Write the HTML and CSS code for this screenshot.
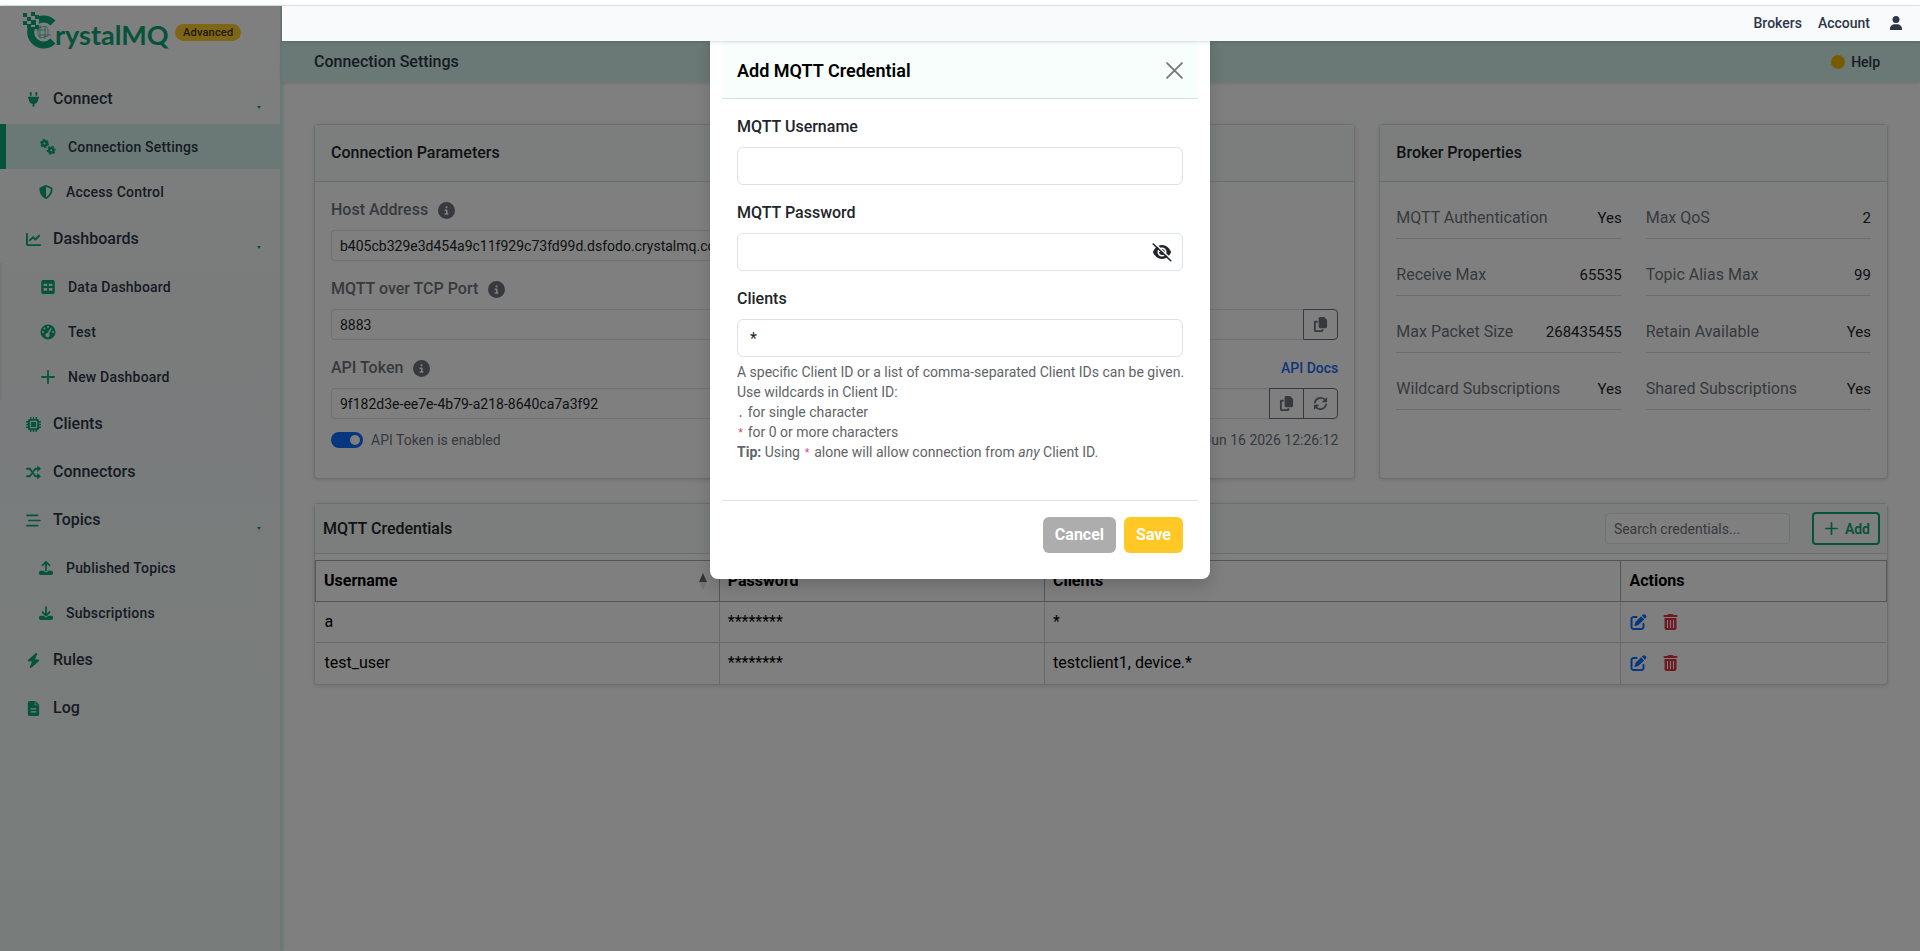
FILE: index.html
```html
<!DOCTYPE html>
<html lang="en">
<head>
  <meta charset="UTF-8" />
  <meta name="viewport" content="width=device-width, initial-scale=1" />
  <title>CrystalMQ - Connection Settings</title>
  <link rel="stylesheet" href="styles.css">
</head>
<body>
  <!-- Icon sprite -->
  <svg class="sprite" aria-hidden="true">
    <symbol id="i-plug" viewBox="0 0 384 512"><path d="M96 0C78.3 0 64 14.3 64 32v96h64V32c0-17.7-14.3-32-32-32zM288 0c-17.7 0-32 14.3-32 32v96h64V32c0-17.7-14.3-32-32-32zM32 160c-17.7 0-32 14.3-32 32s14.3 32 32 32v32c0 77.4 55 142 128 156.8V480c0 17.7 14.3 32 32 32s32-14.3 32-32V412.8C297 398 352 333.4 352 256V224c17.7 0 32-14.3 32-32s-14.3-32-32-32H32z"/></symbol>
    <symbol id="i-gears" viewBox="0 0 32 32">
      <g fill="none" stroke="currentColor">
        <circle cx="9" cy="9" r="4.5" stroke-width="5"/>
        <circle cx="9" cy="9" r="7.5" stroke-width="3" stroke-dasharray="4.4 3.45"/>
        <circle cx="22.5" cy="22.5" r="4.5" stroke-width="5"/>
        <circle cx="22.5" cy="22.5" r="7.5" stroke-width="3" stroke-dasharray="4.4 3.45" stroke-dashoffset="4"/>
      </g>
    </symbol>
    <symbol id="i-shield" viewBox="0 0 512 512"><path d="M256 0c4.6 0 9.2 1 13.4 2.9L457.7 82.8c22 9.3 38.4 31 38.3 57.2c-.5 99.2-41.3 280.7-213.6 363.2c-16.7 8-36.1 8-52.8 0C57.3 420.7 16.5 239.2 16 140c-.1-26.2 16.3-47.9 38.3-57.2L242.7 2.9C246.8 1 251.4 0 256 0zm0 66.8V444.8C394 378 431.1 230.1 432 141.4L256 66.8z"/></symbol>
    <symbol id="i-chart" viewBox="0 0 512 512"><path d="M64 64c0-17.7-14.3-32-32-32S0 46.3 0 64V400c0 44.2 35.8 80 80 80H480c17.7 0 32-14.3 32-32s-14.3-32-32-32H80c-8.8 0-16-7.2-16-16V64zm406.6 86.6c12.5-12.5 12.5-32.8 0-45.3s-32.8-12.5-45.3 0L320 210.7l-57.4-57.4c-12.5-12.5-32.8-12.5-45.3 0l-112 112c-12.5 12.5-12.5 32.8 0 45.3s32.8 12.5 45.3 0L240 221.3l57.4 57.4c12.5 12.5 32.8 12.5 45.3 0l128-128z"/></symbol>
    <symbol id="i-table" viewBox="0 0 512 512"><path fill-rule="evenodd" d="M96 32H416a56 56 0 0 1 56 56V424a56 56 0 0 1-56 56H96a56 56 0 0 1-56-56V88a56 56 0 0 1 56-56zM116 150V226H230V150zM282 150V226H396V150zM116 290V376H230V290zM282 290V376H396V290z"/></symbol>
    <symbol id="i-gauge" viewBox="0 0 512 512"><path fill-rule="evenodd" d="M256 16a240 240 0 1 1 0 480a240 240 0 1 1 0-480zM256 64a30 30 0 1 0 0 60a30 30 0 1 0 0-60zM144 114a30 30 0 1 0 0 60a30 30 0 1 0 0-60zM96 226a30 30 0 1 0 0 60a30 30 0 1 0 0-60zM416 226a30 30 0 1 0 0 60a30 30 0 1 0 0-60zM340 130L242 290a66 66 0 1 0 44 18L376 150z"/></symbol>
    <symbol id="i-plus" viewBox="0 0 16 16"><path d="M8 2v12M2 8h12" fill="none" stroke="currentColor" stroke-width="1.8" stroke-linecap="round"/></symbol>
    <symbol id="i-chip" viewBox="0 0 32 32">
      <path d="M10 1v30M16 1v30M22 1v30M1 10h30M1 16h30M1 22h30" fill="none" stroke="currentColor" stroke-width="3" stroke-linecap="round"/>
      <path d="M8 4H24a4 4 0 0 1 4 4V24a4 4 0 0 1-4 4H8a4 4 0 0 1-4-4V8a4 4 0 0 1 4-4z"/>
      <rect x="9.5" y="9.5" width="13" height="13" rx="1" fill="none" stroke="#eef5f3" stroke-width="2.5"/>
    </symbol>
    <symbol id="i-shuffle" viewBox="0 0 32 32">
      <path d="M2 8h6l12 16h5M2 24h6l3.500-4.500M16.500 12.500L20 8h5" fill="none" stroke="currentColor" stroke-width="3.8" stroke-linecap="round"/>
      <path d="M24 1l8 7-8 7zM24 17l8 7-8 7z"/>
    </symbol>
    <symbol id="i-bars" viewBox="0 0 32 32"><path d="M2 5h23M6 16h24M2 27h23" fill="none" stroke="currentColor" stroke-width="3.5" stroke-linecap="round"/></symbol>
    <symbol id="i-upload" viewBox="0 0 512 512"><path d="M288 109.3V352c0 17.7-14.3 32-32 32s-32-14.3-32-32V109.3l-73.4 73.4c-12.5 12.5-32.8 12.5-45.3 0s-12.5-32.8 0-45.3l128-128c12.5-12.5 32.8-12.5 45.3 0l128 128c12.5 12.5 12.5 32.8 0 45.3s-32.8 12.5-45.3 0L288 109.3zM64 352H192c0 35.3 28.7 64 64 64s64-28.7 64-64H448c35.3 0 64 28.7 64 64v32c0 35.3-28.7 64-64 64H64c-35.3 0-64-28.7-64-64V416c0-35.3 28.7-64 64-64z"/></symbol>
    <symbol id="i-download" viewBox="0 0 512 512"><path d="M288 32c0-17.7-14.3-32-32-32s-32 14.3-32 32V274.7l-73.4-73.4c-12.5-12.5-32.8-12.5-45.3 0s-12.5 32.8 0 45.3l128 128c12.5 12.5 32.8 12.5 45.3 0l128-128c12.5-12.5 12.5-32.8 0-45.3s-32.8-12.5-45.3 0L288 274.7V32zM64 352c-35.3 0-64 28.7-64 64v32c0 35.3 28.7 64 64 64H448c35.3 0 64-28.7 64-64V416c0-35.3-28.7-64-64-64H346.5l-45.3 45.3c-25 25-65.5 25-90.5 0L165.5 352H64z"/></symbol>
    <symbol id="i-bolt" viewBox="0 0 448 512"><path d="M349.4 44.6c5.9-13.7 1.5-29.7-10.6-38.5s-28.6-8-39.9 1.8l-256 224c-10 8.8-13.6 22.9-8.9 35.3S50.7 288 64 288H175.5L98.6 467.4c-5.9 13.7-1.5 29.7 10.6 38.5s28.6 8 39.9-1.8l256-224c10-8.8 13.6-22.9 8.9-35.3s-16.6-20.7-30-20.7H272.5L349.4 44.6z"/></symbol>
    <symbol id="i-file" viewBox="0 0 384 512"><path fill-rule="evenodd" d="M64 0H256L384 128V448a64 64 0 0 1-64 64H64a64 64 0 0 1-64-64V64a64 64 0 0 1 64-64zM236 24V148H360V124H260V24zM96 250v40H288v-40zM96 350v40H288v-40z"/></symbol>
    <symbol id="i-user" viewBox="0 0 448 512"><path d="M224 256A128 128 0 1 0 224 0a128 128 0 1 0 0 256zm-45.7 48C79.8 304 0 383.8 0 482.3C0 498.7 13.3 512 29.7 512H418.3c16.4 0 29.7-13.3 29.7-29.7C448 383.8 368.2 304 269.7 304H178.3z"/></symbol>
    <symbol id="i-info" viewBox="0 0 512 512"><path d="M256 512A256 256 0 1 0 256 0a256 256 0 1 0 0 512zM216 336h24V272H216c-13.3 0-24-10.7-24-24s10.7-24 24-24h48c13.3 0 24 10.7 24 24v88h8c13.3 0 24 10.7 24 24s-10.7 24-24 24H216c-13.3 0-24-10.7-24-24s10.7-24 24-24zm40-208a32 32 0 1 1 0 64 32 32 0 1 1 0-64z"/></symbol>
    <symbol id="i-copy" viewBox="0 0 448 512"><path d="M208 0H332.1c12.7 0 24.9 5.1 33.9 14.1l67.9 67.9c9 9 14.1 21.2 14.1 33.9V336c0 26.5-21.5 48-48 48H208c-26.5 0-48-21.5-48-48V48c0-26.5 21.5-48 48-48zM48 128h80v64H64V448H256V416h64v48c0 26.5-21.5 48-48 48H48c-26.5 0-48-21.5-48-48V176c0-26.5 21.5-48 48-48z"/></symbol>
    <symbol id="i-rotate" viewBox="0 0 32 32">
      <path d="M4 14a12.500 12.500 0 0 1 21-6.500l3 3M28 18a12.500 12.500 0 0 1-21 6.500l-3-3" fill="none" stroke="currentColor" stroke-width="3.6" stroke-linecap="round"/>
      <path d="M30 2v11.500H18.500zM2 30V18.500h11.500z"/>
    </symbol>
    <symbol id="i-edit" viewBox="0 0 512 512"><path d="M471.6 21.7c-21.9-21.9-57.3-21.9-79.2 0L362.3 51.7l97.9 97.9 30.1-30.1c21.9-21.9 21.9-57.3 0-79.2L471.6 21.7zm-299.2 220c-6.1 6.1-10.8 13.6-13.5 21.9l-29.6 88.8c-2.9 8.6-.6 18.1 5.8 24.6s15.9 8.7 24.6 5.8l88.8-29.6c8.2-2.7 15.7-7.4 21.9-13.5L437.7 172.3 339.7 74.3 172.4 241.7zM96 64C43 64 0 107 0 160V416c0 53 43 96 96 96H352c53 0 96-43 96-96V320c0-17.7-14.3-32-32-32s-32 14.3-32 32v96c0 17.7-14.3 32-32 32H96c-17.7 0-32-14.3-32-32V160c0-17.7 14.3-32 32-32h96c17.7 0 32-14.3 32-32s-14.3-32-32-32H96z"/></symbol>
    <symbol id="i-trash" viewBox="0 0 448 512"><path fill-rule="evenodd" d="M135.2 17.7L128 32H32C14.3 32 0 46.3 0 64S14.3 96 32 96H416c17.7 0 32-14.3 32-32s-14.3-32-32-32H320l-7.2-14.3C307.4 6.8 296.3 0 284.2 0H163.8c-12.1 0-23.2 6.8-28.6 17.7zM32 128H416V448c0 35.3-28.7 64-64 64H96c-35.3 0-64-28.7-64-64V128zM112 192V448h32V192zM208 192V448h32V192zM304 192V448h32V192z"/></symbol>
    <symbol id="i-eye-off" viewBox="0 0 640 512">
      <path transform="translate(32 0)" d="M288 32c-80.8 0-145.5 36.8-192.6 80.6C48.6 156 17.3 208 2.5 243.7c-3.3 7.9-3.3 16.7 0 24.6C17.3 304 48.6 356 95.4 399.4C142.5 443.2 207.2 480 288 480s145.5-36.8 192.6-80.6c46.8-43.5 78.1-95.4 93-131.1c3.3-7.9 3.3-16.7 0-24.6c-14.9-35.7-46.2-87.7-93-131.1C433.5 68.8 368.8 32 288 32zM144 256a144 144 0 1 1 288 0 144 144 0 1 1-288 0zm144-64c0 35.3-28.7 64-64 64c-7.1 0-13.9-1.2-20.3-3.3c-5.5-1.8-11.9 1.6-11.7 7.4c.3 6.9 1.3 13.8 3.2 20.7c13.7 51.2 66.4 81.6 117.6 67.9s81.6-66.4 67.9-117.6c-11.1-41.5-47.8-69.4-88.6-71.1c-5.800-.2-9.200 6.100-7.400 11.700c2.100 6.400 3.300 13.200 3.300 20.300z"/>
      <path d="M70 -40L650 520" fill="none" stroke="#fff" stroke-width="50"/>
      <path d="M40 0L600 536" fill="none" stroke="currentColor" stroke-width="50" stroke-linecap="round"/>
    </symbol>
    <symbol id="i-close" viewBox="0 0 16 16"><path d="M1 1l14 14M15 1L1 15" fill="none" stroke="currentColor" stroke-width="1.7" stroke-linecap="round"/></symbol>
  </svg>

  <div class="app">
    <aside class="sidebar">
      <div class="brand">
        <svg class="logo" viewBox="0 0 146 44" role="img" aria-label="CrystalMQ">
          <path d="M30 11A13 13 0 1 0 30 29" fill="none" stroke="currentColor" stroke-width="7"/>
          <rect x="0" y="0" width="16" height="15" fill="#fff"/>
          <path d="M0 1h4v4H0zM8 0h4v4H8zM4 5h4v4H4zM12 3h4v4h-4zM0 9h4v4H0zM8 8h5v5H8zM4 12h4v4H4zM12 13h4v4h-4z"/>
          <path d="M15 16l8-2 2 3v7l-8 2-2-3zM17 13v12M22 15v12M13 18h10M16 23h12" fill="none" stroke="currentColor" stroke-width="1" opacity=".6"/>
          <text x="32" y="33">rystalMQ</text>
        </svg>
        <span class="badge">Advanced</span>
      </div>

      <nav aria-label="Main">
        <a class="nav-item" href="#"><svg class="icon"><use href="#i-plug"/></svg>Connect<span class="caret"></span></a>
        <div class="sub-list">
          <a class="sub-item active" href="#"><svg class="icon icon-lg"><use href="#i-gears"/></svg>Connection Settings</a>
          <a class="sub-item" href="#"><svg class="icon"><use href="#i-shield"/></svg>Access Control</a>
        </div>
        <a class="nav-item" href="#"><svg class="icon"><use href="#i-chart"/></svg>Dashboards<span class="caret"></span></a>
        <div class="sub-list shaded">
          <a class="sub-item" href="#"><svg class="icon icon-lg"><use href="#i-table"/></svg>Data Dashboard</a>
          <a class="sub-item" href="#"><svg class="icon icon-lg"><use href="#i-gauge"/></svg>Test</a>
          <a class="sub-item" href="#"><svg class="icon icon-lg"><use href="#i-plus"/></svg>New Dashboard</a>
        </div>
        <a class="nav-item" href="#"><svg class="icon"><use href="#i-chip"/></svg>Clients</a>
        <a class="nav-item" href="#"><svg class="icon"><use href="#i-shuffle"/></svg>Connectors</a>
        <a class="nav-item" href="#"><svg class="icon"><use href="#i-bars"/></svg>Topics<span class="caret"></span></a>
        <div class="sub-list">
          <a class="sub-item" href="#"><svg class="icon"><use href="#i-upload"/></svg>Published Topics</a>
          <a class="sub-item" href="#"><svg class="icon"><use href="#i-download"/></svg>Subscriptions</a>
        </div>
        <a class="nav-item" href="#"><svg class="icon"><use href="#i-bolt"/></svg>Rules</a>
        <a class="nav-item" href="#"><svg class="icon"><use href="#i-file"/></svg>Log</a>
      </nav>
    </aside>

    <div class="page">
      <header class="topbar">
        <a href="#">Brokers</a>
        <a href="#">Account</a>
        <a class="user-link" href="#" aria-label="Profile"><svg class="icon"><use href="#i-user"/></svg></a>
      </header>

      <div class="page-header">
        <h1>Connection Settings</h1>
        <a class="help" href="#"><span class="help-dot"></span>Help</a>
      </div>

      <main class="content">
        <section class="card params">
          <h2 class="card-header">Connection Parameters</h2>
          <div class="card-body">
            <div class="field">
              <div class="field-head">
                <label for="host">Host Address</label>
                <svg class="icon info"><use href="#i-info"/></svg>
              </div>
              <div class="input-group host-group">
                <input id="host" type="text" readonly value="b405cb329e3d454a9c11f929c73fd99d.dsfodo.crystalmq.com">
                <button type="button" aria-label="Copy host"><svg class="icon"><use href="#i-copy"/></svg></button>
              </div>
            </div>
            <div class="field">
              <div class="field-head">
                <label for="port">MQTT over TCP Port</label>
                <svg class="icon info"><use href="#i-info"/></svg>
              </div>
              <div class="input-group">
                <input id="port" type="text" readonly value="8883">
                <button type="button" aria-label="Copy port"><svg class="icon"><use href="#i-copy"/></svg></button>
              </div>
            </div>
            <div class="field">
              <div class="field-head">
                <label for="token">API Token</label>
                <svg class="icon info"><use href="#i-info"/></svg>
                <a class="docs-link" href="#">API Docs</a>
              </div>
              <div class="input-group">
                <input id="token" type="text" readonly value="9f182d3e-ee7e-4b79-a218-8640ca7a3f92">
                <button type="button" aria-label="Copy token"><svg class="icon"><use href="#i-copy"/></svg></button>
                <button type="button" aria-label="Renew token"><svg class="icon"><use href="#i-rotate"/></svg></button>
              </div>
            </div>
            <div class="token-status">
              <input class="switch" id="token-enabled" type="checkbox" checked>
              <label for="token-enabled">API Token is enabled</label>
              <span class="token-date">Jun 16 2026 12:26:12</span>
            </div>
          </div>
        </section>

        <section class="card broker">
          <h2 class="card-header">Broker Properties</h2>
          <dl class="card-body props">
            <div><dt>MQTT Authentication</dt><dd>Yes</dd></div>
            <div><dt>Max QoS</dt><dd>2</dd></div>
            <div><dt>Receive Max</dt><dd>65535</dd></div>
            <div><dt>Topic Alias Max</dt><dd>99</dd></div>
            <div><dt>Max Packet Size</dt><dd>268435455</dd></div>
            <div><dt>Retain Available</dt><dd>Yes</dd></div>
            <div><dt>Wildcard Subscriptions</dt><dd>Yes</dd></div>
            <div><dt>Shared Subscriptions</dt><dd>Yes</dd></div>
          </dl>
        </section>

        <section class="card credentials">
          <div class="card-toolbar">
            <h2>MQTT Credentials</h2>
            <input type="search" placeholder="Search credentials..." aria-label="Search credentials">
            <button type="button" class="btn-add"><svg class="icon"><use href="#i-plus"/></svg>Add</button>
          </div>
          <table>
            <colgroup><col class="col-user"><col class="col-pass"><col class="col-clients"><col></colgroup>
            <thead>
              <tr>
                <th><div class="sortable">Username<span class="sort-arrows"></span></div></th>
                <th>Password</th>
                <th>Clients</th>
                <th>Actions</th>
              </tr>
            </thead>
            <tbody>
              <tr>
                <td>a</td>
                <td>********</td>
                <td>*</td>
                <td><div class="actions">
                  <button type="button" class="edit" aria-label="Edit"><svg class="icon"><use href="#i-edit"/></svg></button>
                  <button type="button" class="delete" aria-label="Delete"><svg class="icon"><use href="#i-trash"/></svg></button>
                </div></td>
              </tr>
              <tr>
                <td>test_user</td>
                <td>********</td>
                <td>testclient1, device.*</td>
                <td><div class="actions">
                  <button type="button" class="edit" aria-label="Edit"><svg class="icon"><use href="#i-edit"/></svg></button>
                  <button type="button" class="delete" aria-label="Delete"><svg class="icon"><use href="#i-trash"/></svg></button>
                </div></td>
              </tr>
            </tbody>
          </table>
        </section>
      </main>
    </div>

    <!-- Add credential dialog -->
    <div class="overlay">
      <form class="modal" role="dialog" aria-modal="true" aria-labelledby="modal-title">
        <div class="modal-header">
          <h2 id="modal-title">Add MQTT Credential</h2>
          <button type="button" class="close" aria-label="Close"><svg class="icon"><use href="#i-close"/></svg></button>
        </div>
        <div class="modal-body">
          <div class="form-row">
            <label for="username">MQTT Username</label>
            <input id="username" type="text">
          </div>
          <div class="form-row">
            <label for="password">MQTT Password</label>
            <div class="password-box">
              <input id="password" type="password">
              <button type="button" class="toggle-pass" aria-label="Show password"><svg class="icon"><use href="#i-eye-off"/></svg></button>
            </div>
          </div>
          <div class="form-row">
            <label for="clients">Clients</label>
            <input id="clients" type="text" value="*">
            <p class="hint">
              A specific Client ID or a list of comma-separated Client IDs can be given.<br>
              Use wildcards in Client ID:<br>
              <code>.</code> for single character<br>
              <code>*</code> for 0 or more characters<br>
              <strong>Tip:</strong> Using <code>*</code> alone will allow connection from <em>any</em> Client ID.
            </p>
          </div>
        </div>
        <div class="modal-footer">
          <button type="button" class="btn btn-cancel">Cancel</button>
          <button type="submit" class="btn btn-save">Save</button>
        </div>
      </form>
    </div>
  </div>
</body>
</html>
```
FILE: styles.css
```css
:root {
  --green: #0ca678;
  --mint: #d5f2ea;
  --mint-light: #f6fcfa;
  --text: #2d3748;
  --line: #d9dfdd;
}
* {
  margin: 0;
  padding: 0;
  box-sizing: border-box;
}
body {
  font-family: Roboto, "Liberation Sans", sans-serif;
  font-size: 16px;
  line-height: 24px;
  color: #212529;
  background: #fff;
}
button, input {
  font: inherit;
  color: inherit;
}
button {
  cursor: pointer;
}
a {
  color: inherit;
  text-decoration: none;
}
h1, h2 {
  font-size: 16px;
  font-weight: 500;
}
.sprite {
  position: absolute;
  width: 0;
  height: 0;
}
.icon {
  width: 14px;
  height: 14px;
  fill: currentColor;
  flex: none;
}

/* Layout */
.app {
  position: relative;
  display: flex;
  min-height: calc(100vh - 5px);
  margin-top: 5px;
  border-top: 1px solid #e2e6e5;
}
.page {
  flex: 1;
  min-width: 0;
}

/* Sidebar */
.sidebar {
  width: 282px;
  flex: none;
  background: linear-gradient(180deg, #fff 0%, #f4f9f8 30%, #f1faf7 100%);
  border-right: 2px solid #d5f2ea;
  box-shadow: 1px 0 3px rgba(12, 166, 120, 0.25);
}
.brand {
  display: flex;
  align-items: center;
  gap: 6px;
  height: 69px;
  padding: 0 0 14px 23px;
}
.logo {
  width: 146px;
  height: 44px;
  color: var(--green);
  fill: currentColor;
}
.logo text {
  font: 700 27px Lato, sans-serif;
}
.badge {
  padding: 0 8px;
  border-radius: 9px;
  background: #ffca2c;
  color: #3a3420;
  font-size: 11px;
  font-weight: 500;
  line-height: 17px;
  letter-spacing: .2px;
  margin-bottom: 2px;
}
.nav-item {
  position: relative;
  display: flex;
  align-items: center;
  gap: 12px;
  height: 48px;
  padding-left: 26px;
  font-weight: 500;
  color: var(--text);
}
.nav-item .icon {
  width: 15px;
  height: 15px;
}
.nav-item .icon,
.sub-item .icon {
  color: var(--green);
}
.caret {
  position: absolute;
  right: 19px;
  bottom: 14px;
  border: 2px solid transparent;
  border-top: 3px solid var(--green);
  border-bottom: 0;
}
.sub-list {
  padding: 1px 0;
}
.sub-list.shaded {
  border-left: 2px solid #e6eeec;
  margin-right: 2px;
}
.sub-item {
  display: flex;
  align-items: center;
  gap: 13px;
  height: 45px;
  padding-left: 39px;
  font-size: 14px;
  font-weight: 500;
  letter-spacing: .2px;
  color: var(--text);
}
.sub-item .icon-lg {
  width: 16px;
  height: 16px;
}
.shaded .sub-item {
  padding-left: 38px;
  gap: 12px;
}
.sub-item.active {
  background: var(--mint);
  border-left: 6px solid var(--green);
  padding-left: 34px;
  gap: 12px;
}

/* Top bar stays above the dialog */
.topbar {
  position: relative;
  z-index: 3;
  display: flex;
  align-items: center;
  justify-content: flex-end;
  gap: 16px;
  height: 35px;
  padding: 0 17px 2px 0;
  background: #f8fafc;
  color: var(--text);
  font-size: 14px;
  font-weight: 500;
  box-shadow: 0 1px 3px rgba(0, 0, 0, 0.15);
}
.user-link {
  display: flex;
  margin-left: 3px;
}
.page-header {
  display: flex;
  align-items: center;
  justify-content: space-between;
  height: 41px;
  padding: 0 40px 0 32px;
  background: var(--mint);
  box-shadow: 0 1px 4px rgba(12, 120, 90, 0.2);
  color: var(--text);
}
.help {
  display: flex;
  align-items: center;
  gap: 6px;
  font-size: 14px;
  font-weight: 500;
}
.help-dot {
  width: 14px;
  height: 14px;
  border-radius: 50%;
  background: #f0b400;
}

/* Cards */
.content {
  display: grid;
  grid-template-columns: repeat(12, 1fr);
  gap: 24px;
  padding: 42px 32px;
}
.card {
  border: 1px solid var(--line);
  border-radius: 4px;
  background: #fff;
  box-shadow: 0 1px 4px rgba(0, 0, 0, 0.15);
}
.params {
  grid-column: span 8;
}
.broker {
  grid-column: span 4;
}
.credentials {
  grid-column: span 12;
}
.card-header {
  padding: 16px;
  border-bottom: 1px solid var(--line);
  background: var(--mint-light);
}
.card-body {
  padding: 16px;
}
.field {
  margin-bottom: 16px;
}
.field-head {
  display: flex;
  align-items: center;
  gap: 10px;
  margin-bottom: 8px;
  font-weight: 500;
  color: #6c757d;
}
.info {
  width: 17px;
  height: 17px;
}
.docs-link {
  margin-left: auto;
  font-size: 14px;
  color: #1a6bf0;
}
.input-group {
  display: flex;
  height: 31px;
}
.host-group {
  width: 75%;
}
.input-group input {
  flex: 1;
  min-width: 0;
  padding: 0 8px;
  border: 1px solid #dee2e6;
  border-right: 0;
  border-radius: 4px 0 0 4px;
  background: #fff;
  font-size: 14px;
}
.input-group button {
  display: flex;
  align-items: center;
  justify-content: center;
  width: 35px;
  margin-left: -1px;
  border: 1px solid #6c757d;
  background: none;
  color: #6c757d;
}
.input-group button:last-child {
  border-radius: 0 4px 4px 0;
}
.input-group .icon {
  width: 15px;
  height: 15px;
}
.token-status {
  display: flex;
  align-items: center;
  gap: 8px;
  margin: -7px 0 10px;
  font-size: 14px;
  color: #6c757d;
}
.switch {
  appearance: none;
  width: 32px;
  height: 16px;
  padding: 3px;
  border-radius: 8px;
  background: #0d6efd;
}
.switch::before {
  content: "";
  display: block;
  width: 10px;
  height: 10px;
  margin-left: auto;
  border-radius: 50%;
  background: #fff;
}
.token-date {
  margin-left: auto;
}
.props {
  display: grid;
  grid-template-columns: 1fr 1fr;
  align-content: start;
  gap: 16px 24px;
}
.props div {
  display: flex;
  justify-content: space-between;
  padding: 8px 0;
  border-bottom: 1px solid var(--line);
}
.props dt {
  color: #6c757d;
}
.props dd {
  font-size: 15px;
}

/* Credentials table */
.card-toolbar {
  display: flex;
  align-items: center;
  height: 50px;
  margin-bottom: 6px;
  padding: 0 7px 0 8px;
  border-bottom: 1px solid var(--line);
  background: var(--mint-light);
}
.card-toolbar h2 {
  margin-right: auto;
}
.card-toolbar input {
  width: 185px;
  height: 31px;
  padding: 0 8px;
  border: 1px solid #dee2e6;
  border-radius: 4px;
  background: #fff;
  font-size: 14px;
}
.card-toolbar input::placeholder {
  color: #6c757d;
}
.btn-add {
  display: flex;
  align-items: center;
  gap: 6px;
  height: 33px;
  margin-left: 22px;
  padding: 0 8px 0 10px;
  border: 2px solid var(--green);
  border-radius: 4px;
  background: #fff;
  color: var(--green);
  font-size: 14px;
  font-weight: 600;
}
.btn-add .icon {
  width: 15px;
  height: 15px;
}
table {
  width: 100%;
  table-layout: fixed;
  border-collapse: collapse;
  color: #000;
}
.col-user {
  width: 25.7%;
}
.col-pass {
  width: 20.7%;
}
.col-clients {
  width: 36.7%;
}
th, td {
  height: 41px;
  padding: 0 8px;
  text-align: left;
}
th {
  border: 1px solid #a8acab;
  font-weight: 700;
}
td {
  border-top: 1px solid #d0d4d3;
  border-left: 1px solid #d0d4d3;
}
td:first-child {
  border-left: 0;
  padding-left: 9px;
}
.sortable {
  display: flex;
  align-items: center;
  justify-content: space-between;
}
.sort-arrows::before,
.sort-arrows::after {
  content: "";
  display: block;
  margin-right: 4px;
  border: 4px solid transparent;
}
.sort-arrows::before {
  border-top: 0;
  border-bottom: 9px solid #666;
}
.sort-arrows::after {
  border-bottom: 0;
  border-top: 8px solid #e6e6e6;
}
.actions {
  display: flex;
  gap: 15px;
  padding-left: 1px;
}
.actions button {
  display: flex;
  border: 0;
  background: none;
}
.actions .icon {
  width: 17px;
  height: 16px;
}
.edit {
  color: #0d6efd;
}
.delete {
  color: #dc3545;
}

/* Dialog */
.overlay {
  position: absolute;
  inset: 0;
  z-index: 2;
  display: flex;
  align-items: flex-start;
  justify-content: center;
  padding-top: 22px;
  background: rgba(0, 0, 0, 0.5);
}
.modal {
  width: 500px;
  padding: 12px;
  border-radius: 8px;
  background: #fff;
  box-shadow: 0 8px 16px rgba(0, 0, 0, 0.15);
}
.modal-header {
  display: flex;
  align-items: center;
  justify-content: space-between;
  padding: 17px 15px 14px;
  border-bottom: 1px solid var(--line);
  background: #f7fefb;
}
.modal-header h2 {
  font-size: 18px;
  font-weight: 600;
  line-height: 27px;
  color: #000;
}
.close {
  display: flex;
  border: 0;
  background: none;
  color: #777;
}
.close .icon {
  width: 17px;
  height: 17px;
}
.modal-body {
  padding: 16px 15px 22px;
  border-bottom: 1px solid #dee2e6;
}
.form-row {
  margin-bottom: 16px;
}
.form-row label {
  display: block;
  margin-bottom: 8px;
  font-weight: 500;
}
.form-row input {
  display: block;
  width: 100%;
  height: 38px;
  padding: 0 12px;
  border: 1px solid #dee2e6;
  border-radius: 6px;
  background: #fff;
}
.password-box {
  position: relative;
}
.toggle-pass {
  position: absolute;
  top: 0;
  right: 11px;
  display: flex;
  align-items: center;
  height: 100%;
  border: 0;
  background: none;
}
.toggle-pass .icon {
  width: 20px;
  height: 20px;
  overflow: visible;
}
.hint {
  margin-top: 5px;
  font-size: 14px;
  line-height: 20px;
  white-space: nowrap;
  color: #5f6469;
}
.hint code {
  font: 12px "Liberation Mono", monospace;
  color: #d63384;
}
.modal-footer {
  display: flex;
  justify-content: flex-end;
  gap: 8px;
  padding: 16px 15px 14px;
}
.btn {
  height: 36px;
  padding: 0 12px;
  border: 0;
  border-radius: 6px;
  color: #fff;
  font-weight: 700;
}
.btn-cancel {
  background: #adadad;
}
.btn-save {
  background: #ffc824;
}
```
